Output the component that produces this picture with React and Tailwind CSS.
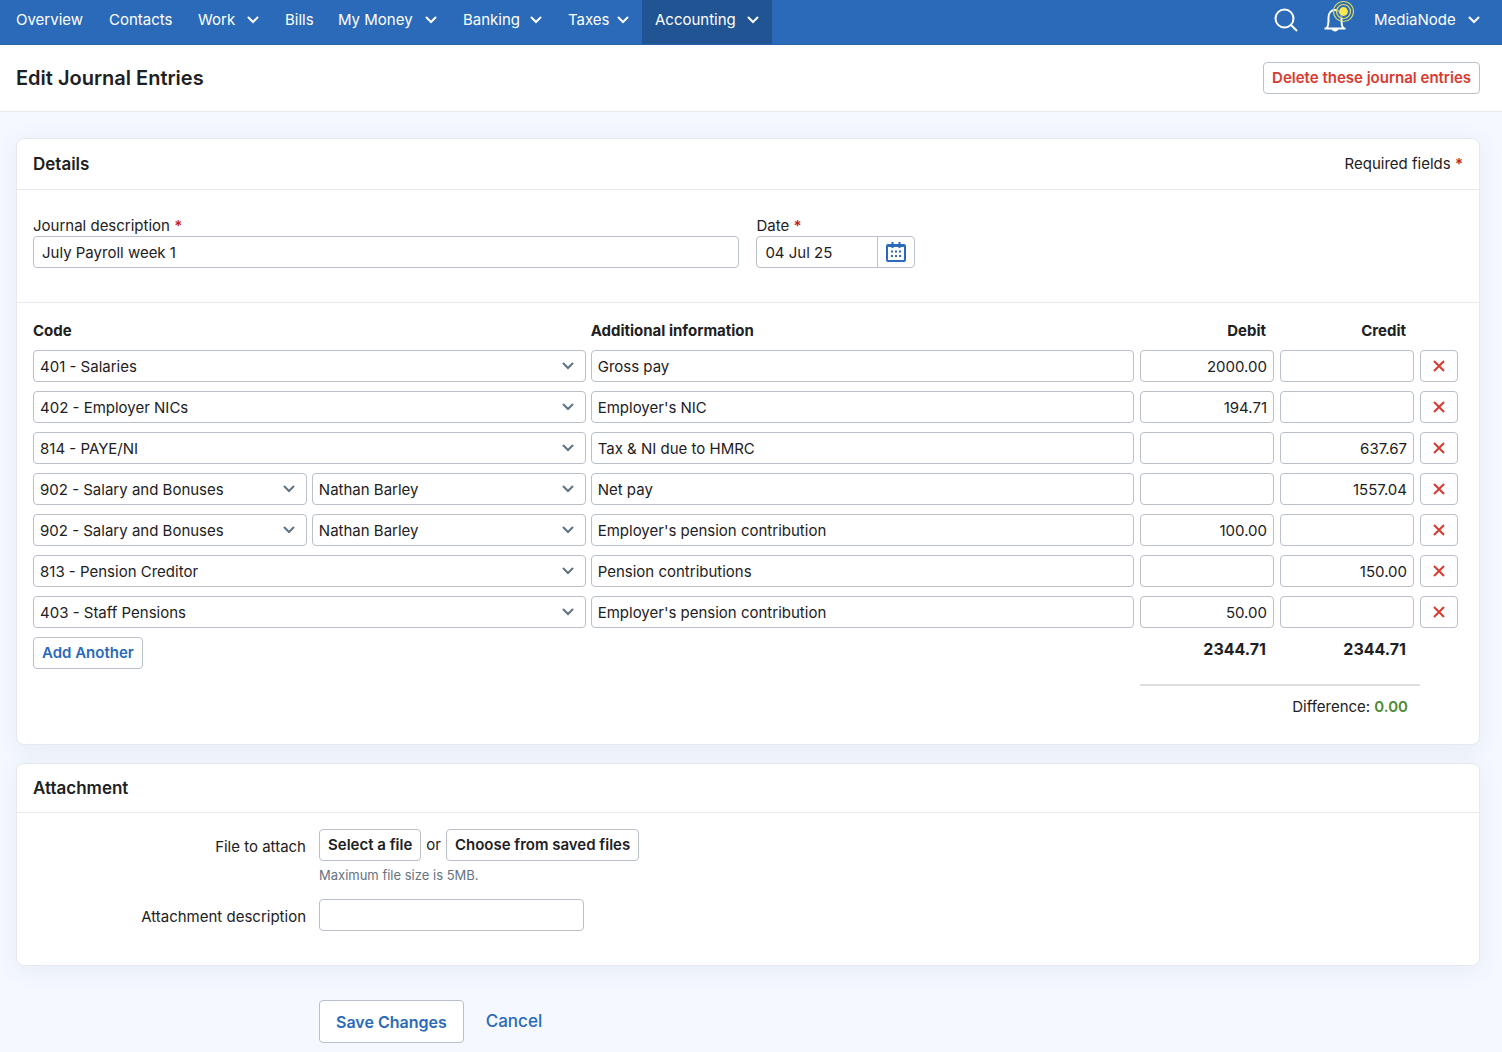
import React from "react";
import clsx from "clsx";

const navItems = [
  { label: "Overview", width: "w-[93px]" },
  { label: "Contacts", width: "w-[89px]" },
  { label: "Work", width: "w-[87px]", menu: true },
  { label: "Bills", width: "w-[53px]" },
  { label: "My Money", width: "w-[125px]", menu: true },
  { label: "Banking", width: "w-[105px]", menu: true },
  { label: "Taxes", width: "w-[87px]", menu: true },
  { label: "Accounting", width: "w-[130px]", menu: true, active: true },
];

const entries = [
  { code: "401 - Salaries", info: "Gross pay", debit: "2000.00", credit: "" },
  { code: "402 - Employer NICs", info: "Employer's NIC", debit: "194.71", credit: "" },
  { code: "814 - PAYE/NI", info: "Tax & NI due to HMRC", debit: "", credit: "637.67" },
  { code: "902 - Salary and Bonuses", person: "Nathan Barley", info: "Net pay", debit: "", credit: "1557.04" },
  { code: "902 - Salary and Bonuses", person: "Nathan Barley", info: "Employer's pension contribution", debit: "100.00", credit: "" },
  { code: "813 - Pension Creditor", info: "Pension contributions", debit: "", credit: "150.00" },
  { code: "403 - Staff Pensions", info: "Employer's pension contribution", debit: "50.00", credit: "" },
];

const fieldClass =
  "block h-8 w-full min-w-0 rounded border border-[#b9c0c8] bg-white text-[#1d2123] outline-none focus:border-[#2a6ab8]";

const buttonClass =
  "h-8 rounded border border-[#b9c0c8] bg-white px-2 font-semibold whitespace-nowrap";

const Chevron = ({ className }) => (
  <svg viewBox="0 0 12 8" className={clsx("h-2 w-3 shrink-0", className)} fill="none" aria-hidden="true">
    <path d="M1.5 1.5 6 6l4.5-4.5" stroke="currentColor" strokeWidth="2" strokeLinecap="round" />
  </svg>
);

const SearchIcon = () => (
  <svg viewBox="0 0 24 24" className="size-6" fill="none" stroke="currentColor" strokeWidth="2" aria-hidden="true">
    <circle cx="10.5" cy="10.5" r="9" />
    <path d="m17 17 6 6" />
  </svg>
);

const BellIcon = () => (
  <svg viewBox="0 0 32 34" className="h-[34px] w-8" fill="none" aria-hidden="true">
    <path
      d="M2.500 28.500h21M5 28c1-2 1.500-4 1.500-7v-3.500c0-4.500 2.500-7.500 6.500-7.500s6.500 3 6.500 7.500V21c0 3 .5 5 1.500 7"
      stroke="#fff"
      strokeWidth="2"
    />
    <path d="M9.500 29h7c-.5 1.500-1.800 2.500-3.500 2.500S10 30.500 9.500 29Z" fill="#fff" />
    <circle cx="21.500" cy="11.500" r="7" fill="#2a6ab8" fillOpacity=".6" />
    <circle cx="21.500" cy="11.500" r="4.400" fill="#fde94b" />
    <circle cx="21.500" cy="11.500" r="7" stroke="#e9e15c" strokeWidth="1.200" />
    <circle cx="21.500" cy="11.500" r="10" stroke="#d3d567" strokeWidth="1.200" />
  </svg>
);

const CalendarIcon = () => (
  <svg viewBox="0 0 20 20" className="size-5" fill="none" stroke="#2a6ab8" aria-hidden="true">
    <rect x="1" y="3" width="18" height="16" rx="1" strokeWidth="2" />
    <path d="M2 4.500h16" strokeWidth="1" />
    <path d="M6.500 0v6M13.500 0v6" strokeWidth="2" />
    <path d="M5 9.500h2m2 0h2m2 0h2M5 14h2m2 0h2m2 0h2" strokeWidth="2" />
  </svg>
);

const CrossIcon = () => (
  <svg viewBox="0 0 12 12" className="size-3" stroke="#d93a2f" strokeWidth="2" aria-hidden="true">
    <path d="m1 1 10 10M11 1 1 11" />
  </svg>
);

const Required = () => <span className="font-semibold text-[#c4221c]">*</span>;

const Select = ({ label, value }) => (
  <div className="relative min-w-0 flex-1">
    <select aria-label={label} defaultValue={value} className={clsx(fieldClass, "appearance-none pt-0.5 pr-8 pl-1.5")}>
      <option>{value}</option>
    </select>
    <Chevron className="pointer-events-none absolute top-3 right-3 text-[#5f7383]" />
  </div>
);

const Panel = ({ title, aside, children }) => (
  <section className="rounded-lg border border-[#e6e9ee] bg-white shadow-[0_4px_24px_rgba(42,84,150,0.08)]">
    <div className="flex items-center justify-between border-b border-[#e6e9ee] px-4 py-3">
      <h2 className="text-[17px] leading-6 font-semibold">{title}</h2>
      {aside}
    </div>
    {children}
  </section>
);

const NavBar = () => (
  <nav className="flex h-[45px] justify-between border-b border-[#2a62a5] bg-[#2a6ab8] pr-2 pl-[3px] text-white">
    <div className="flex">
      {navItems.map((item) => (
        <a
          key={item.label}
          href="#"
          className={clsx(
            "flex items-center justify-between px-[13px] pb-1 whitespace-nowrap",
            item.width,
            item.active && "bg-[#215493]"
          )}
        >
          {item.label}
          {item.menu && <Chevron />}
        </a>
      ))}
    </div>
    <div className="flex items-center pb-1">
      <button type="button" aria-label="Search" className="mr-6">
        <SearchIcon />
      </button>
      <button type="button" aria-label="Notifications" className="mr-5 pb-1.5">
        <BellIcon />
      </button>
      <button type="button" className="flex w-[120px] items-center justify-between pr-3.5">
        MediaNode
        <Chevron />
      </button>
    </div>
  </nav>
);

const JournalTable = () => (
  <table className="w-full table-fixed border-collapse">
    <thead>
      <tr className="h-[29px] text-left align-top leading-5">
        <th className="w-[39%] font-bold">Code</th>
        <th className="font-bold">Additional information</th>
        <th className="w-[140px] pr-3.5 text-right font-bold">Debit</th>
        <th className="w-[140px] pr-3.5 text-right font-bold">Credit</th>
        <th className="w-[43px]" aria-label="Remove" />
      </tr>
    </thead>
    <tbody>
      {entries.map((entry, i) => (
        <tr key={i} className="h-[41px] align-top">
          <td className="pr-[5px]">
            <div className="flex gap-[5px]">
              <Select label="Code" value={entry.code} />
              {entry.person && <Select label="Employee" value={entry.person} />}
            </div>
          </td>
          <td className="pr-1.5">
            <input aria-label="Additional information" defaultValue={entry.info} className={clsx(fieldClass, "px-1.5")} />
          </td>
          <td className="pr-1.5">
            <input aria-label="Debit" defaultValue={entry.debit} className={clsx(fieldClass, "px-1.5 text-right")} />
          </td>
          <td className="pr-1.5">
            <input aria-label="Credit" defaultValue={entry.credit} className={clsx(fieldClass, "px-1.5 text-right")} />
          </td>
          <td>
            <button
              type="button"
              aria-label="Remove entry"
              className="flex h-8 w-[38px] items-center justify-center rounded border border-[#b9c0c8] bg-white"
            >
              <CrossIcon />
            </button>
          </td>
        </tr>
      ))}
    </tbody>
    <tfoot>
      <tr className="h-12 align-top font-bold">
        <td colSpan={2}>
          <button type="button" className={clsx(buttonClass, "text-[#2a6ab8]")}>
            Add Another
          </button>
        </td>
        <td className="pr-3.5 text-right text-base leading-6">2344.71</td>
        <td className="pr-3.5 text-right text-base leading-6">2344.71</td>
        <td />
      </tr>
      <tr>
        <td colSpan={2} />
        <td colSpan={2} className="border-t-2 border-[#dcdee1] pt-[11px] pr-3 text-right leading-5">
          Difference: <span className="font-semibold text-[#4f8a35]">0.00</span>
        </td>
        <td />
      </tr>
    </tfoot>
  </table>
);

const App = () => {
  return (
    <div className="min-h-screen bg-[#f5f8fe] font-['Inter',sans-serif] text-[15px] leading-6 text-[#1d2123]">
      <NavBar />

      <header className="flex h-[67px] items-center justify-between border-b border-[#e6e9ee] bg-white pr-[22px] pl-4">
        <h1 className="text-xl font-semibold">Edit Journal Entries</h1>
        <button type="button" className={clsx(buttonClass, "text-[#d93a2f]")}>
          Delete these journal entries
        </button>
      </header>

      <main className="pt-[26px] pr-[22px] pb-3 pl-4">
        <form className="flex flex-col gap-[18px]" onSubmit={(e) => e.preventDefault()}>
          <Panel
            title="Details"
            aside={
              <p className="leading-[26px]">
                Required fields <Required />
              </p>
            }
          >
            <div className="flex gap-[17px] border-b border-[#e6e9ee] px-4 pt-6 pb-[34px]">
              <div className="w-[49.4%]">
                <label htmlFor="description" className="block h-[22px]">
                  Journal description <Required />
                </label>
                <input
                  id="description"
                  defaultValue="July Payroll week 1"
                  className={clsx(fieldClass, "px-2")}
                />
              </div>
              <div>
                <label htmlFor="date" className="block h-[22px]">
                  Date <Required />
                </label>
                <div className="flex h-8 w-[159px] overflow-hidden rounded border border-[#b9c0c8] bg-white">
                  <input id="date" defaultValue="04 Jul 25" className="w-0 flex-1 px-2 pt-0.5 outline-none" />
                  <button
                    type="button"
                    aria-label="Choose date"
                    className="flex w-[37px] items-center justify-center border-l border-[#b9c0c8]"
                  >
                    <CalendarIcon />
                  </button>
                </div>
              </div>
            </div>
            <div className="px-4 pt-[18px] pb-[27px]">
              <JournalTable />
            </div>
          </Panel>

          <Panel title="Attachment">
            <div className="grid grid-cols-[273px_1fr] gap-x-[13px] px-4 pt-4 pb-[34px]">
              <span className="pt-1.5 text-right">File to attach</span>
              <div>
                <div className="flex items-center gap-[5px]">
                  <button type="button" className={buttonClass}>
                    Select a file
                  </button>
                  or
                  <button type="button" className={buttonClass}>
                    Choose from saved files
                  </button>
                </div>
                <p className="pt-0.5 pb-3 text-[13px]/6 text-[#64747f]">Maximum file size is 5MB.</p>
              </div>
              <label htmlFor="attachment-description" className="pt-1.5 text-right">
                Attachment description
              </label>
              <input id="attachment-description" className={clsx(fieldClass, "max-w-[265px] px-2")} />
            </div>
          </Panel>

          <div className="flex items-center gap-[22px] pt-4 pl-[303px] text-base font-semibold text-[#2a6ab8]">
            <button type="submit" className="h-[43px] rounded border border-[#b9c0c8] bg-white px-4">
              Save Changes
            </button>
            <a href="#" className="text-[17px] font-medium">
              Cancel
            </a>
          </div>
        </form>
      </main>
    </div>
  );
};

export default App;
